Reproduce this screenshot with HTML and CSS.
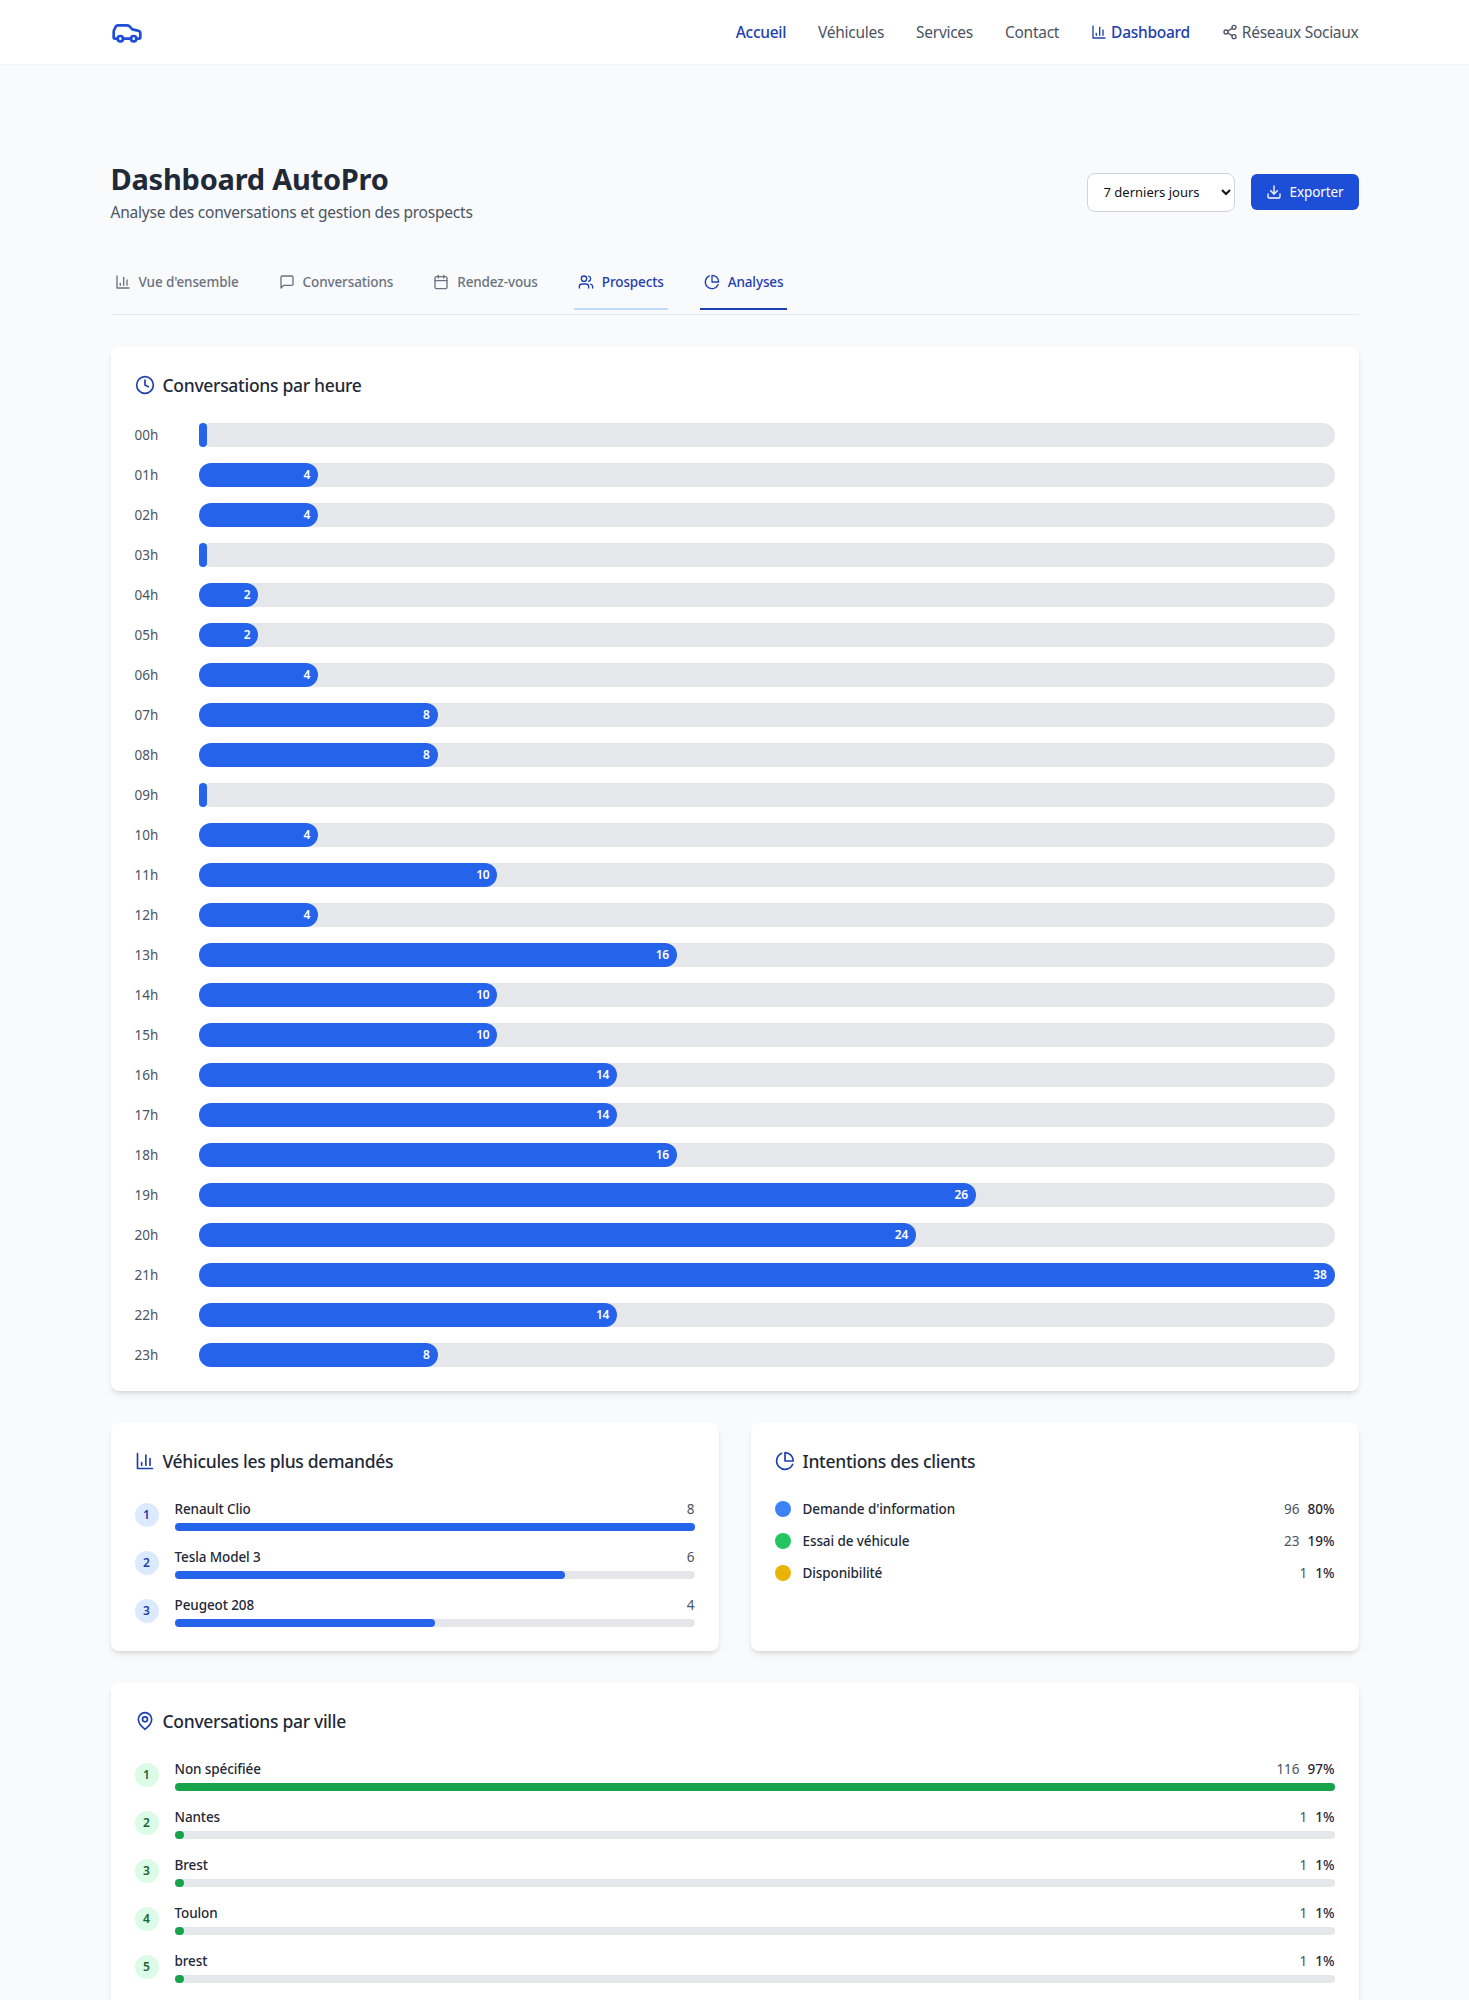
FILE: index.html
```html
<!DOCTYPE html>
<html lang="fr">
<head>
<meta charset="utf-8">
<title>Dashboard AutoPro</title>
<link rel="stylesheet" href="styles.css">
</head>
<body>
<svg class="sprite" width="0" height="0">
  <symbol id="i-car" viewBox="0 0 24 24"><path d="M19 17h2c.6 0 1-.4 1-1v-3c0-.9-.7-1.7-1.5-1.9C18.7 10.6 16 10 16 10s-1.3-1.4-2.2-2.3c-.5-.4-1.1-.7-1.8-.7H5c-.6 0-1.1.4-1.4.9l-1.4 2.9A3.7 3.7 0 0 0 2 12v4c0 .6.4 1 1 1h2"/><circle cx="7" cy="17" r="2"/><path d="M9 17h6"/><circle cx="17" cy="17" r="2"/></symbol>
  <symbol id="i-chart" viewBox="0 0 24 24"><path d="M3 3v18h18"/><path d="M18 17V9"/><path d="M13 17V5"/><path d="M8 17v-3"/></symbol>
  <symbol id="i-share" viewBox="0 0 24 24"><circle cx="18" cy="5" r="3"/><circle cx="6" cy="12" r="3"/><circle cx="18" cy="19" r="3"/><line x1="8.59" y1="13.51" x2="15.42" y2="17.49"/><line x1="15.41" y1="6.51" x2="8.59" y2="10.49"/></symbol>
  <symbol id="i-download" viewBox="0 0 24 24"><path d="M21 15v4a2 2 0 0 1-2 2H5a2 2 0 0 1-2-2v-4"/><polyline points="7 10 12 15 17 10"/><line x1="12" y1="15" x2="12" y2="3"/></symbol>
  <symbol id="i-msg" viewBox="0 0 24 24"><path d="M21 15a2 2 0 0 1-2 2H7l-4 4V5a2 2 0 0 1 2-2h14a2 2 0 0 1 2 2z"/></symbol>
  <symbol id="i-cal" viewBox="0 0 24 24"><rect x="3" y="4" width="18" height="18" rx="2"/><line x1="16" y1="2" x2="16" y2="6"/><line x1="8" y1="2" x2="8" y2="6"/><line x1="3" y1="10" x2="21" y2="10"/></symbol>
  <symbol id="i-users" viewBox="0 0 24 24"><path d="M16 21v-2a4 4 0 0 0-4-4H6a4 4 0 0 0-4 4v2"/><circle cx="9" cy="7" r="4"/><path d="M22 21v-2a4 4 0 0 0-3-3.87"/><path d="M16 3.13a4 4 0 0 1 0 7.75"/></symbol>
  <symbol id="i-pie" viewBox="0 0 24 24"><path d="M21.21 15.89A10 10 0 1 1 8 2.83"/><path d="M22 12A10 10 0 0 0 12 2v10z"/></symbol>
  <symbol id="i-clock" viewBox="0 0 24 24"><circle cx="12" cy="12" r="10"/><polyline points="12 6 12 12 16 14"/></symbol>
  <symbol id="i-pin" viewBox="0 0 24 24"><path d="M20 10c0 6-8 12-8 12s-8-6-8-12a8 8 0 0 1 16 0Z"/><circle cx="12" cy="10" r="3"/></symbol>
</svg>

<header class="topbar">
  <div class="topbar-inner">
    <svg class="icon logo"><use href="#i-car"/></svg>
    <nav class="mainnav">
      <a class="navlink active">Accueil</a>
      <a class="navlink">Véhicules</a>
      <a class="navlink">Services</a>
      <a class="navlink">Contact</a>
      <a class="navlink active iconlink"><svg class="icon i16"><use href="#i-chart"/></svg>Dashboard</a>
      <a class="navlink iconlink"><svg class="icon i16"><use href="#i-share"/></svg>Réseaux Sociaux</a>
    </nav>
  </div>
</header>

<main class="page">
  <section class="pagehead">
    <div>
      <h1 class="pagetitle">Dashboard AutoPro</h1>
      <p class="pagesub">Analyse des conversations et gestion des prospects</p>
    </div>
    <div class="actions">
      <select class="period"><option>7 derniers jours</option><option>30 derniers jours</option></select>
      <button class="export"><svg class="icon i16"><use href="#i-download"/></svg>Exporter</button>
    </div>
  </section>

  <nav class="tabs">
    <a class="tab"><svg class="icon i16"><use href="#i-chart"/></svg>Vue d'ensemble</a>
    <a class="tab"><svg class="icon i16"><use href="#i-msg"/></svg>Conversations</a>
    <a class="tab"><svg class="icon i16"><use href="#i-cal"/></svg>Rendez-vous</a>
    <a class="tab hover"><svg class="icon i16"><use href="#i-users"/></svg>Prospects</a>
    <a class="tab current"><svg class="icon i16"><use href="#i-pie"/></svg>Analyses</a>
  </nav>

  <section class="card">
    <h2 class="cardtitle"><svg class="icon i20"><use href="#i-clock"/></svg>Conversations par heure</h2>
    <div class="hours">
      <div class="hour"><span class="hourlabel">00h</span><div class="hourtrack"><div class="hourfill" style="width:8px"></div></div></div>
      <div class="hour"><span class="hourlabel">01h</span><div class="hourtrack"><div class="hourfill" style="width:10.526%">4</div></div></div>
      <div class="hour"><span class="hourlabel">02h</span><div class="hourtrack"><div class="hourfill" style="width:10.526%">4</div></div></div>
      <div class="hour"><span class="hourlabel">03h</span><div class="hourtrack"><div class="hourfill" style="width:8px"></div></div></div>
      <div class="hour"><span class="hourlabel">04h</span><div class="hourtrack"><div class="hourfill" style="width:5.263%">2</div></div></div>
      <div class="hour"><span class="hourlabel">05h</span><div class="hourtrack"><div class="hourfill" style="width:5.263%">2</div></div></div>
      <div class="hour"><span class="hourlabel">06h</span><div class="hourtrack"><div class="hourfill" style="width:10.526%">4</div></div></div>
      <div class="hour"><span class="hourlabel">07h</span><div class="hourtrack"><div class="hourfill" style="width:21.053%">8</div></div></div>
      <div class="hour"><span class="hourlabel">08h</span><div class="hourtrack"><div class="hourfill" style="width:21.053%">8</div></div></div>
      <div class="hour"><span class="hourlabel">09h</span><div class="hourtrack"><div class="hourfill" style="width:8px"></div></div></div>
      <div class="hour"><span class="hourlabel">10h</span><div class="hourtrack"><div class="hourfill" style="width:10.526%">4</div></div></div>
      <div class="hour"><span class="hourlabel">11h</span><div class="hourtrack"><div class="hourfill" style="width:26.316%">10</div></div></div>
      <div class="hour"><span class="hourlabel">12h</span><div class="hourtrack"><div class="hourfill" style="width:10.526%">4</div></div></div>
      <div class="hour"><span class="hourlabel">13h</span><div class="hourtrack"><div class="hourfill" style="width:42.105%">16</div></div></div>
      <div class="hour"><span class="hourlabel">14h</span><div class="hourtrack"><div class="hourfill" style="width:26.316%">10</div></div></div>
      <div class="hour"><span class="hourlabel">15h</span><div class="hourtrack"><div class="hourfill" style="width:26.316%">10</div></div></div>
      <div class="hour"><span class="hourlabel">16h</span><div class="hourtrack"><div class="hourfill" style="width:36.842%">14</div></div></div>
      <div class="hour"><span class="hourlabel">17h</span><div class="hourtrack"><div class="hourfill" style="width:36.842%">14</div></div></div>
      <div class="hour"><span class="hourlabel">18h</span><div class="hourtrack"><div class="hourfill" style="width:42.105%">16</div></div></div>
      <div class="hour"><span class="hourlabel">19h</span><div class="hourtrack"><div class="hourfill" style="width:68.421%">26</div></div></div>
      <div class="hour"><span class="hourlabel">20h</span><div class="hourtrack"><div class="hourfill" style="width:63.158%">24</div></div></div>
      <div class="hour"><span class="hourlabel">21h</span><div class="hourtrack"><div class="hourfill" style="width:100%">38</div></div></div>
      <div class="hour"><span class="hourlabel">22h</span><div class="hourtrack"><div class="hourfill" style="width:36.842%">14</div></div></div>
      <div class="hour"><span class="hourlabel">23h</span><div class="hourtrack"><div class="hourfill" style="width:21.053%">8</div></div></div>
    </div>
  </section>

  <div class="twocol">
    <section class="card">
      <h2 class="cardtitle"><svg class="icon i20"><use href="#i-chart"/></svg>Véhicules les plus demandés</h2>
      <div class="ranks">
        <div class="rank"><span class="badge">1</span><div class="rankbody"><div class="rankline"><span class="rankname">Renault Clio</span><span class="count">8</span></div><div class="ranktrack"><div class="rankfill" style="width:100%"></div></div></div></div>
        <div class="rank"><span class="badge">2</span><div class="rankbody"><div class="rankline"><span class="rankname">Tesla Model 3</span><span class="count">6</span></div><div class="ranktrack"><div class="rankfill" style="width:75%"></div></div></div></div>
        <div class="rank"><span class="badge">3</span><div class="rankbody"><div class="rankline"><span class="rankname">Peugeot 208</span><span class="count">4</span></div><div class="ranktrack"><div class="rankfill" style="width:50%"></div></div></div></div>
      </div>
    </section>
    <section class="card">
      <h2 class="cardtitle"><svg class="icon i20"><use href="#i-pie"/></svg>Intentions des clients</h2>
      <div class="intents">
        <div class="intent"><span class="dot dot-blue"></span><span class="rankname grow">Demande d'information</span><span class="count">96</span><span class="pct">80%</span></div>
        <div class="intent"><span class="dot dot-green"></span><span class="rankname grow">Essai de véhicule</span><span class="count">23</span><span class="pct">19%</span></div>
        <div class="intent"><span class="dot dot-yellow"></span><span class="rankname grow">Disponibilité</span><span class="count">1</span><span class="pct">1%</span></div>
      </div>
    </section>
  </div>

  <section class="card">
    <h2 class="cardtitle"><svg class="icon i20"><use href="#i-pin"/></svg>Conversations par ville</h2>
    <div class="ranks">
      <div class="rank green"><span class="badge">1</span><div class="rankbody"><div class="rankline"><span class="rankname">Non spécifiée</span><span class="nums"><span class="count">116</span><span class="pct">97%</span></span></div><div class="ranktrack"><div class="rankfill" style="width:100%"></div></div></div></div>
      <div class="rank green"><span class="badge">2</span><div class="rankbody"><div class="rankline"><span class="rankname">Nantes</span><span class="nums"><span class="count">1</span><span class="pct">1%</span></span></div><div class="ranktrack"><div class="rankfill" style="width:0.86%"></div></div></div></div>
      <div class="rank green"><span class="badge">3</span><div class="rankbody"><div class="rankline"><span class="rankname">Brest</span><span class="nums"><span class="count">1</span><span class="pct">1%</span></span></div><div class="ranktrack"><div class="rankfill" style="width:0.86%"></div></div></div></div>
      <div class="rank green"><span class="badge">4</span><div class="rankbody"><div class="rankline"><span class="rankname">Toulon</span><span class="nums"><span class="count">1</span><span class="pct">1%</span></span></div><div class="ranktrack"><div class="rankfill" style="width:0.86%"></div></div></div></div>
      <div class="rank green"><span class="badge">5</span><div class="rankbody"><div class="rankline"><span class="rankname">brest</span><span class="nums"><span class="count">1</span><span class="pct">1%</span></span></div><div class="ranktrack"><div class="rankfill" style="width:0.86%"></div></div></div></div>
    </div>
  </section>
</main>
</body>
</html>
```

FILE: styles.css
```css
* { box-sizing: border-box; }
html, body { margin: 0; padding: 0; }
body { background: #f9fafb; color: #1f2937; font-family: "Noto Sans", "Liberation Sans", sans-serif; font-size: 14px; line-height: 20px; }
.sprite { position: absolute; }
.icon { fill: none; stroke: currentColor; stroke-width: 2; stroke-linecap: round; stroke-linejoin: round; flex: none; display: block; }
.i16 { width: 16px; height: 16px; }
.i20 { width: 20px; height: 20px; color: #1e40af; }
.topbar { background: #fff; border-bottom: 1px solid #f1f3f5; height: 65px; }
.topbar-inner { width: 1280px; margin: 0 auto; padding: 0 16px; height: 64px; display: flex; align-items: center; justify-content: space-between; }
.logo { width: 32px; height: 32px; color: #1d4ed8; }
.mainnav { display: flex; gap: 32px; align-items: center; }
.navlink { font-size: 15.5px; line-height: 24px; letter-spacing: -0.28px; color: #4b5563; }
.navlink.active { color: #1e40af; font-weight: 500; }
.iconlink { display: flex; align-items: center; gap: 4px; }
.page { width: 1280px; margin: 0 auto; padding: 96px 16px 32px; }
.pagehead { display: flex; justify-content: space-between; align-items: center; margin-bottom: 34px; }
.pagetitle { margin: 0; font-size: 29px; line-height: 36px; font-weight: 700; letter-spacing: -0.24px; color: #1f2937; }
.pagesub { margin: 3px 0 0; font-size: 15.5px; line-height: 24px; letter-spacing: -0.22px; color: #4b5563; }
.actions { display: flex; align-items: center; gap: 16px; margin-bottom: 1px; }
.period { width: 148px; height: 39px; padding: 8px 12px; background: #fff; border: 1px solid #d1d5db; border-radius: 8px; font: inherit; font-size: 13px; color: #111; }
.export { width: 108px; height: 36px; display: flex; align-items: center; justify-content: center; gap: 8px; background: #1d4ed8; color: #fff; border: 0; border-radius: 6px; font: inherit; font-size: 13.5px; letter-spacing: -0.1px; font-weight: 400; }
.tabs { display: flex; gap: 32px; padding-bottom: 4px; border-bottom: 1px solid #e5e7eb; margin-bottom: 32px; }
.tab { display: flex; align-items: center; gap: 8px; padding: 14px 4px 16px; font-size: 13.5px; letter-spacing: -0.12px; font-weight: 500; color: #6b7280; border-bottom: 2px solid transparent; }
.tab.hover { color: #1e40af; border-bottom-color: #bfdbfe; }
.tab.current { color: #1e40af; border-bottom-color: #1e40af; }
.card { background: #fff; border-radius: 8px; padding: 24px; box-shadow: 0 4px 6px -1px rgba(0,0,0,.1), 0 2px 4px -2px rgba(0,0,0,.1); margin-bottom: 32px; }
.twocol { display: grid; grid-template-columns: 1fr 1fr; gap: 32px; margin-bottom: 32px; }
.twocol .card { margin: 0; }
.cardtitle { margin: 0 0 24px; display: flex; align-items: center; gap: 8px; font-size: 17.5px; line-height: 28px; letter-spacing: -0.3px; font-weight: 500; color: #1f2937; }
.hours { display: flex; flex-direction: column; gap: 16px; }
.hour { display: flex; align-items: center; height: 24px; }
.hourlabel { width: 64px; flex: none; font-size: 13.5px; color: #4b5563; }
.hourtrack { flex: 1; height: 24px; background: #e5e7eb; border-radius: 12px; }
.hourfill { height: 24px; background: #2563eb; border-radius: 12px; color: #fff; font-size: 12px; letter-spacing: -0.3px; line-height: 24px; font-weight: 600; text-align: right; padding-right: 8px; }
.ranks { display: flex; flex-direction: column; gap: 16px; }
.rank { display: flex; align-items: center; gap: 16px; }
.badge { width: 24px; height: 24px; flex: none; border-radius: 50%; background: #dbeafe; color: #1e40af; font-size: 12px; line-height: 24px; font-weight: 600; text-align: center; }
.rankbody { flex: 1; }
.rankline { display: flex; justify-content: space-between; margin-bottom: 4px; }
.rankname { font-size: 13.5px; letter-spacing: -0.1px; color: #1f2937; font-weight: 500; }
.count { color: #4b5563; font-size: 13.5px; }
.nums { display: flex; gap: 8px; }
.pct { font-size: 13.5px; font-weight: 500; color: #1f2937; }
.ranktrack { height: 8px; background: #e5e7eb; border-radius: 4px; }
.rankfill { height: 8px; background: #2563eb; border-radius: 4px; }
.green .badge { background: #dcfce7; color: #166534; }
.green .rankfill { background: #16a34a; }
.intents { display: flex; flex-direction: column; gap: 12px; }
.intent { display: flex; align-items: center; gap: 8px; }
.dot { width: 16px; height: 16px; border-radius: 50%; margin-right: 4px; flex: none; }
.dot-blue { background: #3b82f6; }
.dot-green { background: #22c55e; }
.dot-yellow { background: #eab308; }
.grow { flex: 1; }
```
